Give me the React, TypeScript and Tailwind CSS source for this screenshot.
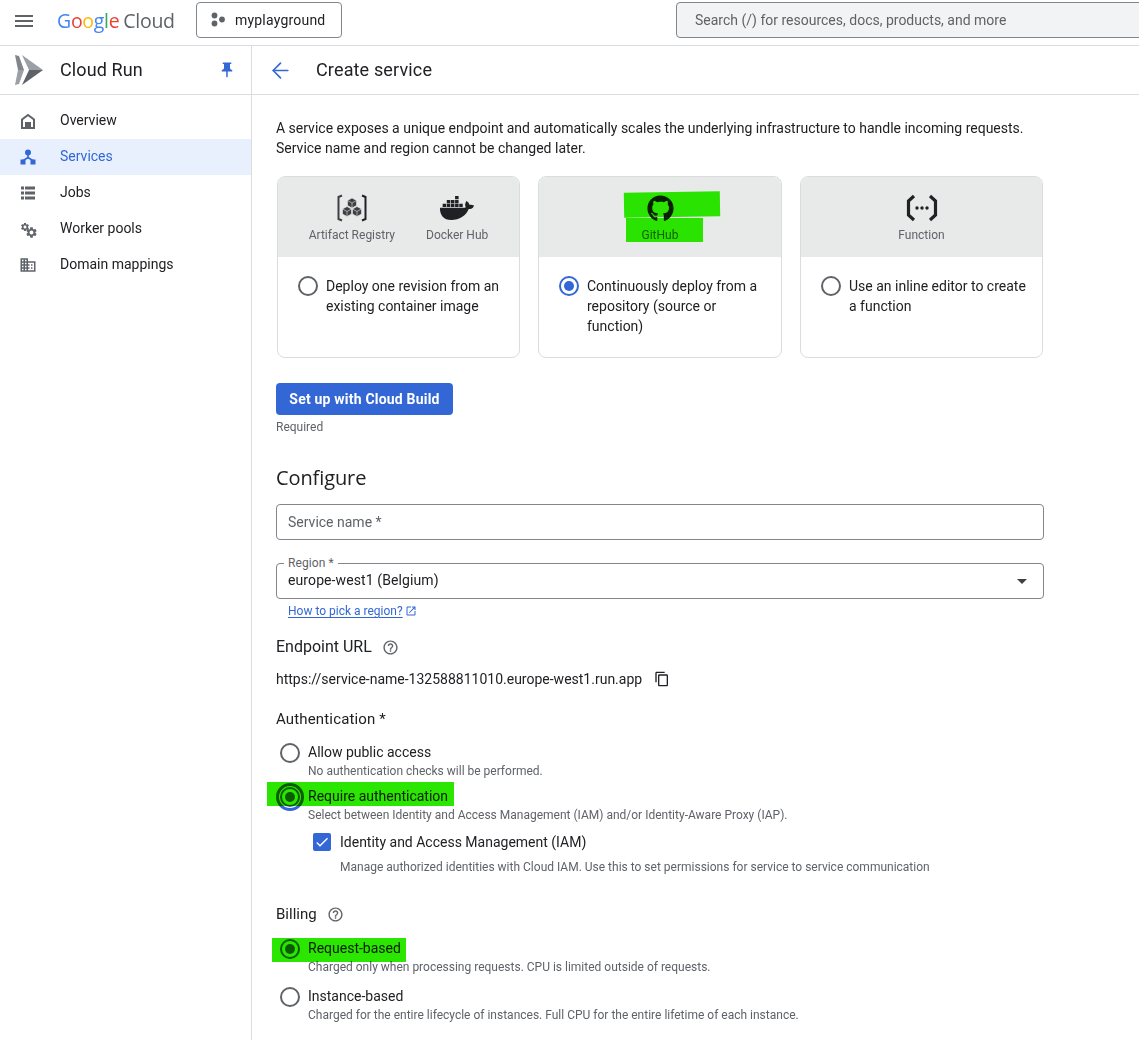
import { ArrowLeft } from 'lucide-react'
import { FaGithub, FaDocker } from 'react-icons/fa'
import { MdMenu, MdPushPin, MdDomain, MdSettings, MdHelpOutline, MdContentCopy, MdOpenInNew, MdCheck } from 'react-icons/md'

const font = "font-['Roboto','Liberation_Sans',sans-serif]"

function GoogleCloudLogo() {
  return (
    <span className="flex items-center text-[19.5px] leading-none tracking-[-0.3px] font-['Open_Sans','Roboto',sans-serif]">
      <span className="text-[#4285f4]">G</span>
      <span className="text-[#ea4335]">o</span>
      <span className="text-[#fbbc05]">o</span>
      <span className="text-[#4285f4]">g</span>
      <span className="text-[#34a853]">l</span>
      <span className="text-[#ea4335]">e</span>
      <span className="text-[#5f6368] ml-[4px]">Cloud</span>
    </span>
  )
}

function RunLogo() {
  return (
    <svg width="30" height="30" viewBox="0 0 30 30">
      <path d="M1 0 L5 1 L10 15 L1 15 L4 15 Z" fill="#80868b" />
      <path d="M1 30 L5 29 L10 15 L4 15 Z" fill="#9aa0a6" />
      <path d="M8 0 L29 15 L15 15 Z" fill="#9aa0a6" />
      <path d="M15 15 L29 15 L8 30 Z" fill="#5f6368" />
    </svg>
  )
}

function NavIcon({ name, color }: { name: string; color: string }) {
  if (name === 'home')
    return (
      <svg width="18" height="18" viewBox="0 0 18 18" fill="none" stroke={color} strokeWidth="2">
        <path d="M3 7.5 L9 3 L15 7.5 V16 H3 Z" />
        <rect x="6" y="10" width="6" height="6" fill={color} stroke="none" />
      </svg>
    )
  if (name === 'services')
    return (
      <svg width="18" height="18" viewBox="0 0 18 18" fill={color}>
        <circle cx="9" cy="4.5" r="3" />
        <rect x="8.2" y="6" width="1.6" height="5" />
        <path d="M9 9.5 L3.5 13 M9 9.5 L14.5 13" stroke={color} strokeWidth="1.5" />
        <rect x="1.5" y="11.5" width="5" height="5" />
        <rect x="11.5" y="11.5" width="5" height="5" />
      </svg>
    )
  if (name === 'jobs')
    return (
      <svg width="18" height="18" viewBox="0 0 18 18" fill={color}>
        <rect x="2" y="2.5" width="3" height="3" />
        <rect x="6" y="2.5" width="10" height="3" />
        <rect x="2" y="7.5" width="3" height="3" />
        <rect x="6" y="7.5" width="10" height="3" />
        <rect x="2" y="12.5" width="3" height="3" />
        <rect x="6" y="12.5" width="10" height="3" />
      </svg>
    )
  if (name === 'pools')
    return (
      <span className="relative w-[18px] h-[18px] block">
        <MdSettings size={10} color={color} className="absolute left-[1px] top-[2px]" />
        <MdSettings size={13} color={color} className="absolute left-[6px] top-[6px]" />
      </span>
    )
  return <MdDomain size={18} color={color} />
}

function Cube({ x, y }: { x: number; y: number }) {
  return (
    <g transform={`translate(${x} ${y})`}>
      <path d="M0 -5 L4.5 -2.5 V2.5 L0 5 L-4.5 2.5 V-2.5 Z" fill="#3c4043" stroke="#e8eaea" strokeWidth="0.6" />
      <path d="M-4.5 -2.5 L0 0 L4.5 -2.5 M0 0 V5" stroke="#e8eaea" strokeWidth="0.6" fill="none" />
    </g>
  )
}

function ArtifactIcon() {
  return (
    <svg width="30" height="28" viewBox="0 0 30 28" fill="none">
      <path d="M5 1.5 L1.5 3 V25 L5 26.5" stroke="#3c4043" strokeWidth="2" />
      <path d="M25 1.5 L28.5 3 V25 L25 26.5" stroke="#202124" strokeWidth="2" />
      <Cube x={15} y={9} />
      <Cube x={10} y={17.5} />
      <Cube x={20} y={17.5} />
    </svg>
  )
}

function FunctionIcon() {
  return (
    <svg width="32" height="28" viewBox="0 0 32 28" fill="none">
      <path d="M8 2 L2.5 7 V21 L8 26" stroke="#202124" strokeWidth="3.2" />
      <path d="M24 2 L29.5 7 V21 L24 26" stroke="#202124" strokeWidth="3.2" />
      <circle cx="11" cy="14" r="1.7" fill="#202124" />
      <circle cx="16" cy="14" r="1.7" fill="#202124" />
      <circle cx="21" cy="14" r="1.7" fill="#202124" />
    </svg>
  )
}

function Radio({ checked }: { checked?: boolean }) {
  if (checked) {
    return (
      <span className="w-5 h-5 rounded-full border-2 border-[#3367d6] flex items-center justify-center shrink-0">
        <span className="w-[10px] h-[10px] rounded-full bg-[#3367d6]" />
      </span>
    )
  }
  return <span className="block w-5 h-5 rounded-full border-2 border-[#5f6368] shrink-0" />
}

function SourceCard({ children, text, checked, wide }: { children: any; text: string; checked?: boolean; wide?: boolean }) {
  return (
    <div className={`${wide ? 'w-[244px]' : 'w-[243px]'} h-[182px] rounded-[8px] border border-[#dadce0] overflow-hidden`}>
      <div className="h-[80px] bg-[#e8eaea] flex justify-center">{children}</div>
      <div className="flex gap-[8px] pl-[20px] pr-[12px] pt-[19px] text-sm leading-[20px] text-[#202124]">
        <span className="shrink-0"><Radio checked={checked} /></span>
        <span>{text}</span>
      </div>
    </div>
  )
}

function Source({ icon, label }: { icon: any; label: string }) {
  return (
    <div className="flex flex-col items-center pt-[17px]">
      <div className="h-[28px] flex items-center justify-center">{icon}</div>
      <span className="mt-[5px] text-xs leading-[16px] text-[#5f6368]">{label}</span>
    </div>
  )
}

function Option({ title, desc, checked }: { title: string; desc: string; checked?: boolean }) {
  return (
    <div className="flex gap-[8px] pl-[4px]">
      <span className="relative shrink-0 mt-[1px]">
        <Radio checked={checked} />
      </span>
      <div>
        <div className="text-sm leading-[21px]">{title}</div>
        <div className="text-xs leading-[16px] text-[#5f6368]">{desc}</div>
      </div>
    </div>
  )
}

const nav = [
  { icon: 'home', label: 'Overview' },
  { icon: 'services', label: 'Services', active: true },
  { icon: 'jobs', label: 'Jobs' },
  { icon: 'pools', label: 'Worker pools' },
  { icon: 'domain', label: 'Domain mappings' },
]

export default function App() {
  return (
    <div className={`${font} w-[1139px] h-[1040px] overflow-hidden bg-white text-[#202124] flex flex-col`}>
      <header className="h-[46px] shrink-0 border-b border-[#dadce0] flex items-center">
        <MdMenu size={24} color="#5f6368" className="ml-[12px] -mt-[3px] shrink-0" />
        <span className="ml-[21px] -mt-[3px] w-[116px] shrink-0"><GoogleCloudLogo /></span>
        <button className="ml-[23px] w-[146px] h-[36px] shrink-0 rounded-[4px] border border-[#80868b] flex items-center pl-[13px] text-sm tracking-[0.2px] text-[#202124] -mt-[5px]">
          <svg width="16" height="16" viewBox="0 0 16 16" fill="#5f6368">
            <circle cx="4.5" cy="3.5" r="2.9" />
            <circle cx="4.5" cy="11.5" r="2.9" />
            <circle cx="12" cy="7.5" r="2.9" />
          </svg>
          <span className="ml-[9px]">myplayground</span>
        </button>
        <div className="ml-[334px] w-[480px] h-[36px] shrink-0 -mt-[5px] rounded-[4px] border border-[#80868b] bg-[#f1f3f4] flex items-center pl-[18px] text-sm text-[#5f6368]">
          Search (/) for resources, docs, products, and more
        </div>
      </header>
      <div className="flex flex-1 min-h-0">
        <aside className="w-[252px] shrink-0 border-r border-[#dadce0]">
          <div className="h-[49px] border-b border-[#dadce0] flex items-center pl-[14px] pr-[15px]">
            <RunLogo />
            <span className="ml-[16px] text-[18px] leading-[24px] tracking-[0.1px]">Cloud Run</span>
            <MdPushPin size={18} color="#3367d6" className="ml-auto" />
          </div>
          <nav className="pt-[8px]">
            {nav.map((item) => (
              <div
                key={item.label}
                className={`h-[36px] flex items-center pl-[19px] text-sm ${item.active ? 'bg-[#e8f0fe] text-[#3367d6]' : ''}`}
              >
                <NavIcon name={item.icon} color={item.active ? '#3367d6' : '#5f6368'} />
                <span className="ml-[23px] mb-[2px]">{item.label}</span>
              </div>
            ))}
          </nav>
        </aside>
        <main className="flex-1 min-w-0">
          <div className="h-[49px] border-b border-[#dadce0] flex items-center pl-[16px]">
            <ArrowLeft size={25} color="#3367d6" strokeWidth={1.6} />
            <h1 className="ml-[23px] text-[18px] leading-[24px] tracking-[0.15px]">Create service</h1>
          </div>
          <div className="pl-[24px] w-[792px]">
            <p className="mt-[23px] text-sm leading-[20px]">
              A service exposes a unique endpoint and automatically scales the underlying infrastructure to handle incoming requests.
              <br />
              Service name and region cannot be changed later.
            </p>
            <div className="mt-[18px] ml-[1px] flex gap-[18px]">
              <SourceCard text="Deploy one revision from an existing container image">
                <div className="flex gap-[31px]">
                  <Source icon={<ArtifactIcon />} label="Artifact Registry" />
                  <Source icon={<FaDocker size={34} color="#202124" />} label="Docker Hub" />
                </div>
              </SourceCard>
              <SourceCard wide text="Continuously deploy from a repository (source or function)" checked>
                <div className="relative w-full flex justify-center">
                  <Source icon={<FaGithub size={27} color="#202124" />} label="GitHub" />
                  <div className="absolute left-[85px] top-[15px] w-[96px] h-[25px] bg-[#2ef800] mix-blend-multiply -rotate-1" />
                  <div className="absolute left-[87px] top-[41px] w-[77px] h-[24px] bg-[#2ef800] mix-blend-multiply" />
                </div>
              </SourceCard>
              <SourceCard text="Use an inline editor to create a function">
                <Source icon={<FunctionIcon />} label="Function" />
              </SourceCard>
            </div>
            <button className="mt-[25px] h-[32px] w-[177px] rounded-[4px] bg-[#3367d6] text-white text-[14px] font-bold tracking-[0.2px] block">
              Set up with Cloud Build
            </button>
            <div className="mt-[4px] text-xs leading-[16px] text-[#5f6368]">Required</div>
            <h2 className="mt-[29px] text-[20px] leading-[28px] font-['Open_Sans','Roboto',sans-serif] -tracking-[0.1px]">Configure</h2>
            <div className="mt-[12px] h-[36px] w-[768px] rounded-[4px] border border-[#80868b] flex items-center pl-[11px] text-sm text-[#5f6368]">
              Service name *
            </div>
            <div className="relative mt-[23px] h-[36px] w-[768px] rounded-[4px] border border-[#80868b] flex items-center pl-[11px] text-sm tracking-[0.1px]">
              <span className="absolute left-[7px] -top-[8px] px-[4px] bg-white text-xs leading-[14px] text-[#5f6368]">Region *</span>
              <span className="-mt-[2px]">europe-west1 (Belgium)</span>
              <span className="absolute right-[16px] top-[15px] w-0 h-0 border-x-[5px] border-x-transparent border-t-[5px] border-t-[#3c4043]" />
            </div>
            <div className="mt-[4px] ml-[12px] flex items-center text-xs leading-[16px] text-[#3367d6]">
              <span className="underline underline-offset-2">How to pick a region?</span>
              <MdOpenInNew size={12} className="ml-[2px]" />
            </div>
            <div className="mt-[16px] flex items-center text-[16px] leading-[24px]">
              Endpoint URL
              <MdHelpOutline size={17} color="#5f6368" className="ml-[10px]" />
            </div>
            <div className="mt-[8px] flex items-center text-sm leading-[24px]">
              https://service-name-132588811010.europe-west1.run.app
              <MdContentCopy size={16} color="#202124" className="ml-[12px]" />
            </div>
            <div className="mt-[16px] text-[15px] leading-[24px] tracking-[0.15px]">Authentication *</div>

            <div className="mt-[11px]">
              <Option title="Allow public access" desc="No authentication checks will be performed." />
            </div>
            <div className="relative mt-[7px]">
              <span className="absolute left-0 -top-[3px] w-[28px] h-[28px] rounded-full border-[3px] border-[#3367d6]" />
              <Option
                checked
                title="Require authentication"
                desc="Select between Identity and Access Management (IAM) and/or Identity-Aware Proxy (IAP)."
              />
              <div className="absolute -left-[9px] -top-[4px] w-[187px] h-[24px] bg-[#2ae600] mix-blend-multiply" />
            </div>
            <div className="mt-[9px] pl-[37px] flex gap-[9px]">
              <span className="mt-[1px] w-[18px] h-[18px] rounded-[2px] bg-[#3367d6] flex items-center justify-center shrink-0">
                <MdCheck size={16} color="white" />
              </span>
              <div>
                <div className="text-sm leading-[20px]">Identity and Access Management (IAM)</div>
                <div className="mt-[7px] text-xs leading-[16px] text-[#5f6368]">
                  Manage authorized identities with Cloud IAM. Use this to set permissions for service to service communication
                </div>
              </div>
            </div>
            <div className="mt-[27px] flex items-center text-[15px] leading-[24px]">
              Billing
              <MdHelpOutline size={17} color="#5f6368" className="ml-[10px]" />
            </div>
            <div className="relative mt-[12px]">
              <Option
                checked
                title="Request-based"
                desc="Charged only when processing requests. CPU is limited outside of requests."
              />
              <div className="absolute -left-[4px] top-0 w-[134px] h-[24px] bg-[#2ae600] mix-blend-multiply" />
            </div>
            <div className="mt-[11px]">
              <Option
                title="Instance-based"
                desc="Charged for the entire lifecycle of instances. Full CPU for the entire lifetime of each instance."
              />
            </div>
          </div>
        </main>
      </div>
    </div>
  )
}
